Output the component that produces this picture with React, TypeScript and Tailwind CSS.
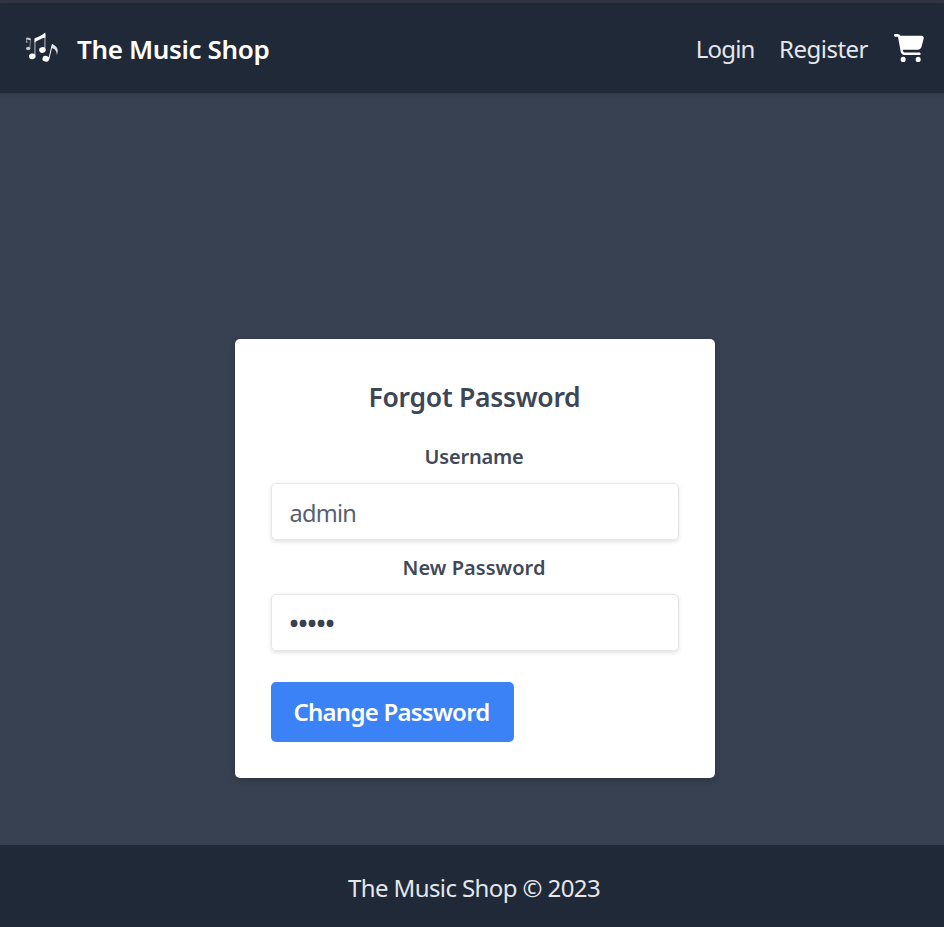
import { FaCartShopping } from "react-icons/fa6";

function MusicNotes() {
  return (
    <svg className="h-[32px] w-[34px] shrink-0" viewBox="0 0 34 32" fill="white">
      <g opacity="0.75">
        <path d="M1.500 5.500 5.500 6v2.200L1.500 7.500z" />
        <path d="M1.500 6v3.500M5.500 7 4.800 16" stroke="white" strokeWidth="0.6" fill="none" />
        <ellipse cx="3.200" cy="16.500" rx="2.200" ry="1.800" />
        <ellipse cx="1.800" cy="10" rx="0.900" ry="0.700" />
      </g>
      <path d="M9.600 6.200C13.500 5.600 16.500 3.200 20.300 .600V5.600C16.500 6.200 13.500 8.600 9.600 10.300z" />
      <path d="M10 7 9.900 24M20 2 19.900 18" stroke="white" strokeWidth="0.900" opacity="0.8" />
      <ellipse cx="7.300" cy="24.300" rx="3.300" ry="2.800" transform="rotate(-15 7.300 24.300)" />
      <ellipse cx="17.400" cy="18" rx="3.300" ry="2.800" transform="rotate(-15 17.400 18)" />
      <ellipse cx="20.800" cy="26.800" rx="3.400" ry="2.900" transform="rotate(15 20.800 26.800)" />
      <path d="M23.800 27 27.300 12.500" stroke="white" strokeWidth="1" />
      <path d="M27.200 11.700C28.800 13 31 13.500 32.300 16.500 33 18.500 32.800 20.500 31.800 23 31.800 18.500 29.500 16.500 26.500 16z" opacity="0.85" />
    </svg>
  );
}

function Field({ id, label, type, value }: { id: string; label: string; type: string; value: string }) {
  const password = type === "password";
  return (
    <div className="flex flex-col">
      <label htmlFor={id} className="mb-[11px] pr-[2px] text-center text-[20px] leading-[30px] font-semibold text-[#3f4959]">
        <span className={password ? "tracking-[0.050px]" : "tracking-[-0.200px]"}>{label}</span>
      </label>
      <input
        id={id}
        type={type}
        defaultValue={value}
        className={`h-[57px] w-full rounded-[5px] border-[1.5px] border-[#e5e7eb] shadow-[0_1.5px_4px_rgba(0,0,0,0.12)] outline-none ${
          password ? "px-[17.500px] text-[24px] font-bold text-[#374151]" : "px-[17.500px] pt-[2px] text-[23.5px] tracking-[-0.700px] text-[#566070]"
        }`}
      />
    </div>
  );
}

export default function App() {
  return (
    <div className="flex h-[927px] w-[944px] flex-col overflow-hidden bg-[#374151] font-['Noto_Sans',sans-serif]">
      <div className="h-[3px] shrink-0 bg-[#313642]" />
      <header className="z-10 flex h-[90px] shrink-0 items-center bg-[#1f2937] pr-5 pl-[25px] text-white shadow-[0_1px_4px_rgba(0,0,0,0.18)]">
        <MusicNotes />
        <span className="ml-[18px] pt-[2px] text-[26px] font-semibold tracking-[-0.350px]">The Music Shop</span>
        <nav className="ml-auto flex items-center text-[24px] text-[#e5e7eb]">
          <a className="pt-px tracking-[-0.850px]">Login</a>
          <a className="ml-[24.5px] pt-px tracking-[-0.500px]">Register</a>
          <FaCartShopping className="ml-[26px] h-[28px] w-[30px] text-white" preserveAspectRatio="none" />
        </nav>
      </header>
      <main className="flex flex-1 flex-col items-center pt-[246px]">
        <form className="ml-[6px] flex h-[439px] w-[480px] flex-col rounded-[5px] bg-white px-9 pt-[37px] shadow-[0_2px_6px_rgba(0,0,0,0.2)]">
          <h1 className="pr-px text-center text-[26.5px] leading-[42px] font-semibold tracking-[-0.300px] text-[#3c4656]">Forgot Password</h1>
          <div className="mt-6 flex flex-col gap-[13px]">
            <Field id="username" label="Username" type="text" value="admin" />
            <Field id="password" label="New Password" type="password" value="admin" />
          </div>
          <button type="button" className="mt-[30.5px] h-[60px] w-[243px] rounded-[5px] bg-[#3b82f6] pt-px pr-[2px] text-[24px] font-semibold tracking-[-0.750px] text-white">
            Change Password
          </button>
        </form>
      </main>
      <footer className="flex h-[82px] shrink-0 items-center justify-center bg-[#1f2937] pt-[3px] pl-[4px] text-[24px] text-[#e5e7eb]">
        <span className="tracking-[-0.600px]">The Music Shop © 2023</span>
      </footer>
    </div>
  );
}
